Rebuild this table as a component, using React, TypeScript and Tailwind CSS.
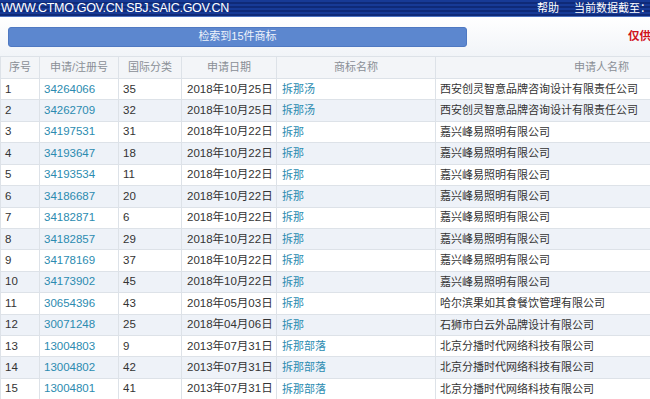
import React from 'react';

const rows = [
  ['1', '34264066', '35', '2018年10月25日', '拆那汤', '西安创灵智意品牌咨询设计有限责任公司'],
  ['2', '34262709', '32', '2018年10月25日', '拆那汤', '西安创灵智意品牌咨询设计有限责任公司'],
  ['3', '34197531', '31', '2018年10月22日', '拆那', '嘉兴峰易照明有限公司'],
  ['4', '34193647', '18', '2018年10月22日', '拆那', '嘉兴峰易照明有限公司'],
  ['5', '34193534', '11', '2018年10月22日', '拆那', '嘉兴峰易照明有限公司'],
  ['6', '34186687', '20', '2018年10月22日', '拆那', '嘉兴峰易照明有限公司'],
  ['7', '34182871', '6', '2018年10月22日', '拆那', '嘉兴峰易照明有限公司'],
  ['8', '34182857', '29', '2018年10月22日', '拆那', '嘉兴峰易照明有限公司'],
  ['9', '34178169', '37', '2018年10月22日', '拆那', '嘉兴峰易照明有限公司'],
  ['10', '34173902', '45', '2018年10月22日', '拆那', '嘉兴峰易照明有限公司'],
  ['11', '30654396', '43', '2018年05月03日', '拆那', '哈尔滨果如其食餐饮管理有限公司'],
  ['12', '30071248', '25', '2018年04月06日', '拆那', '石狮市白云外品牌设计有限公司'],
  ['13', '13004803', '9', '2013年07月31日', '拆那部落', '北京分播时代网络科技有限公司'],
  ['14', '13004802', '42', '2013年07月31日', '拆那部落', '北京分播时代网络科技有限公司'],
  ['15', '13004801', '41', '2013年07月31日', '拆那部落', '北京分播时代网络科技有限公司'],
];

const heads = ['序号', '申请/注册号', '国际分类', '申请日期', '商标名称', '申请人名称'];
const widths = ['w-[39px]', 'w-[79px]', 'w-[63px]', 'w-[95px]', 'w-[159px]', 'w-[332px]'];

export default function App() {
  return (
    <div className="w-[650px] h-[399px] overflow-hidden bg-white font-['Liberation_Sans','Noto_Sans_CJK_SC',sans-serif]">
      <div className="w-[800px]">
        {/* top strip */}
        <div className="h-[17px] flex items-center justify-between border-b border-[#4d73c2] bg-[repeating-linear-gradient(180deg,#173a96_0px,#173a96_2px,#0f2a78_2px,#0f2a78_4px)] text-white">
          <span className="text-[12.5px] leading-none tracking-[-0.3px] pl-[1px]">WWW.CTMO.GOV.CN SBJ.SAIC.GOV.CN</span>
          <div className="flex items-center text-[11px] leading-none w-[263px]">
            <span>帮助</span>
            <span className="ml-[15px]">当前数据截至：</span>
          </div>
        </div>

        <div className="h-[39px] flex items-center bg-gradient-to-b from-white to-[#f1f4f8]">
          <div className="ml-[8px] w-[459px] h-[20px] rounded-[3px] bg-[#5c87cf] border border-[#4f79c2] flex items-center justify-center text-[11px] text-[#eef3fb]">
            检索到15件商标
          </div>
          <span className="ml-[161px] text-[11.5px] font-bold text-[#d0121b]">仅供参考</span>
        </div>

        <table className="border-collapse table-fixed w-[767px] text-[11px]">
          <thead>
            <tr className="h-[22px] bg-[#f3f5f8]">
              {heads.map((h, i) => (
                <th key={h} className={`${widths[i]} font-normal text-[#8a8f96] text-center border border-[#dde2e8] p-0`}>
                  {h}
                </th>
              ))}
            </tr>
          </thead>
          <tbody>
            {rows.map((r, idx) => (
              <tr key={r[0]} className={`h-[21.43px] ${idx % 2 === 1 ? 'bg-[#eef2f8]' : 'bg-white'}`}>
                <td className="border border-[#dde2e8] pl-[4px] py-0 text-[#333] text-[11.5px]">{r[0]}</td>
                <td className="border border-[#dde2e8] pl-[4px] py-0 text-[#2b8bb0] text-[11.5px]">{r[1]}</td>
                <td className="border border-[#dde2e8] pl-[4px] py-0 text-[#333] text-[11.5px]">{r[2]}</td>
                <td className="border border-[#dde2e8] pl-[5px] py-0 text-[#333] text-[11.5px]">{r[3]}</td>
                <td className="border border-[#dde2e8] pl-[5px] py-0 text-[#2b8bb0]">{r[4]}</td>
                <td className="border border-[#dde2e8] pl-[4px] py-0 text-[#333]">{r[5]}</td>
              </tr>
            ))}
          </tbody>
        </table>
      </div>
    </div>
  );
}
